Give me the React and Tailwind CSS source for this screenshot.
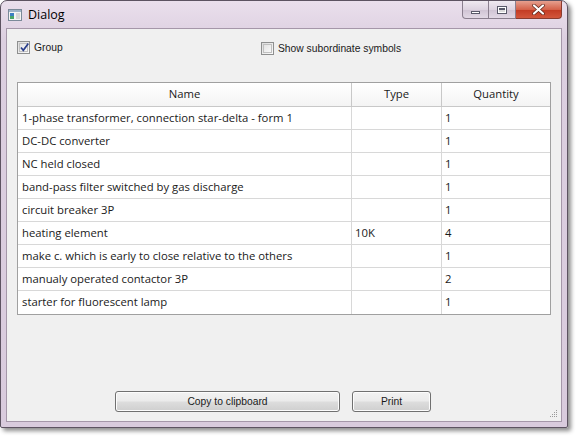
import React from "react";

const rows = [
    ["1-phase transformer, connection star-delta - form 1", "", "1"],
    ["DC-DC converter", "", "1"],
    ["NC held closed", "", "1"],
    ["band-pass filter switched by gas discharge", "", "1"],
    ["circuit breaker 3P", "", "1"],
    ["heating element", "10K", "4"],
    ["make c. which is early to close relative to the others", "", "1"],
    ["manualy operated contactor 3P", "", "2"],
    ["starter for fluorescent lamp", "", "1"],
];

const dlgFont = { fontFamily: '"Liberation Sans", Arial, sans-serif' };

function CheckBox({ checked }) {
    return (
        <div className="w-[13px] h-[13px] border border-[#8e8f8f] bg-gradient-to-br from-[#dcdcdc] to-[#fbfbfb] p-px">
            <div className="w-full h-full border border-[#c0c0c0] bg-gradient-to-br from-[#e4e4e4] to-[#f8f8f8] relative">
                {checked && (
                    <svg className="absolute -left-[1px] -top-[2px]" width="11" height="11" viewBox="0 0 11 11">
                        <path d="M2 5.5 L4.3 8.3 L9.3 1.5" fill="none" stroke="#2b3f8c" strokeWidth="1.7" />
                    </svg>
                )}
            </div>
        </div>
    );
}

function WinButton({ children, width }) {
    return (
        <button
            style={dlgFont}
            className={`${width} h-[21px] rounded-[3px] border border-[#707070] bg-[linear-gradient(#f2f2f2_0%,#ebebeb_48%,#dddddd_52%,#cfcfcf_100%)] shadow-[inset_0_0_0_1px_#fcfcfc] text-[10.3px] text-[#1a1a1a] flex items-center justify-center`}
        >
            {children}
        </button>
    );
}

export default function App() {
    return (
        <div className="w-[582px] h-[442px] bg-white" style={{ fontFamily: '"Open Sans", "Noto Sans", sans-serif' }}>
            <div className="w-[568px] h-[428px] rounded-t-[7px] rounded-b-[2px] border border-[#5d5361] bg-[linear-gradient(#eadfec,#dccfe0_40px,#d9cbdd)] shadow-[3px_3px_4px_rgba(0,0,0,0.45)] flex flex-col px-[5px] pb-[5px]">

                {/* title bar */}
                <div className="h-[27px] flex items-start justify-between">
                    <div className="flex items-center gap-[6px] pt-[8px] pl-[2px]">
                        <svg width="14" height="12" viewBox="0 0 14 12">
                            <rect x="0.5" y="0.5" width="13" height="11" fill="#f4f4f4" stroke="#7b8a99" />
                            <rect x="1" y="1" width="12" height="2" fill="#9fb3c8" />
                            <rect x="2" y="4" width="4" height="3" fill="#3d7ec2" />
                            <rect x="2" y="7" width="4" height="3" fill="#4aa56a" />
                            <rect x="8" y="4" width="4" height="6" fill="#d6d6d6" />
                        </svg>
                        <span className="text-[12.5px] text-black leading-none">Dialog</span>
                    </div>

                    <div className="flex h-[18px]">
                        <div className="w-[27px] h-full rounded-bl-[4px] border border-t-0 border-[#8a7f8e] bg-[linear-gradient(#efe9f0,#ddd3e0_50%,#cfc3d3_51%,#e2d8e5)] flex items-end justify-center pb-[4px]">
                            <div className="w-[9px] h-[3px] bg-white border border-[#5a5a6a]" />
                        </div>
                        <div className="w-[27px] h-full border-b border-r border-[#8a7f8e] bg-[linear-gradient(#efe9f0,#ddd3e0_50%,#cfc3d3_51%,#e2d8e5)] flex items-center justify-center">
                            <div className="w-[10px] h-[8px] border border-[#5a5a6a] bg-white p-px">
                                <div className="w-full h-full border-t-2 border-[#5a5a6a] bg-[#dcdcdc]" />
                            </div>
                        </div>
                        <div className="w-[46px] h-full rounded-br-[4px] border border-t-0 border-l-0 border-[#8a3b2e] bg-[linear-gradient(#e6a08f,#d4624a_50%,#c23a22_51%,#d3573c)] flex items-center justify-center">
                            <svg width="13" height="11" viewBox="0 0 13 11">
                                <path d="M2 1.5 L11 9.5 M11 1.5 L2 9.5" stroke="#5b2318" strokeWidth="3.6" strokeLinecap="round" />
                                <path d="M2 1.5 L11 9.5 M11 1.5 L2 9.5" stroke="#ffffff" strokeWidth="2.2" strokeLinecap="round" />
                            </svg>
                        </div>
                    </div>
                </div>

                {/* client area */}
                <div className="flex-1 bg-[#f0f0f0] border border-[#a597a9] flex flex-col text-[11.3px] text-[#1a1a1a] relative">

                    <div className="flex items-center h-[13px] mt-[12px] pl-[10px] text-[10.3px]" style={dlgFont}>
                        <div className="flex items-center gap-[4px] w-[244px]">
                            <CheckBox checked />
                            <span>Group</span>
                        </div>
                        <div className="flex items-center gap-[4px] mt-[2px]">
                            <CheckBox />
                            <span>Show subordinate symbols</span>
                        </div>
                    </div>

                    {/* table */}
                    <div className="ml-[10px] mt-[28px] w-[534px] border border-[#a0a0a0] bg-white">
                        <div className="flex h-[24px] border-b border-[#c8c8c8] bg-[linear-gradient(#ffffff,#f4f4f4)]">
                            <div className="w-[334px] border-r border-[#c8c8c8] flex items-center justify-center">Name</div>
                            <div className="w-[90px] border-r border-[#c8c8c8] flex items-center justify-center">Type</div>
                            <div className="flex-1 flex items-center justify-center">Quantity</div>
                        </div>
                        {rows.map((r, i) => (
                            <div key={i} className="flex h-[23px] border-b border-[#d8d8d8] last:border-b-0">
                                <div className="w-[334px] border-r border-[#d8d8d8] flex items-center pl-[4px] whitespace-nowrap">{r[0]}</div>
                                <div className="w-[90px] border-r border-[#d8d8d8] flex items-center pl-[3px]">{r[1]}</div>
                                <div className="flex-1 flex items-center pl-[3px]">{r[2]}</div>
                            </div>
                        ))}
                    </div>

                    <div className="flex-1" />

                    <div className="flex gap-[12px] pl-[108px] mb-[9px]">
                        <WinButton width="w-[225px]">Copy to clipboard</WinButton>
                        <WinButton width="w-[79px]">Print</WinButton>
                    </div>

                    {/* size grip */}
                    <svg className="absolute right-[3px] bottom-[3px]" width="8" height="8" viewBox="0 0 8 8">
                        <rect x="6" y="0" width="1" height="1" fill="#9a9a9a" />
                        <rect x="4" y="2" width="1" height="1" fill="#9a9a9a" />
                        <rect x="6" y="2" width="1" height="1" fill="#9a9a9a" />
                        <rect x="2" y="4" width="1" height="1" fill="#9a9a9a" />
                        <rect x="4" y="4" width="1" height="1" fill="#9a9a9a" />
                        <rect x="6" y="4" width="1" height="1" fill="#9a9a9a" />
                        <rect x="0" y="6" width="1" height="1" fill="#9a9a9a" />
                        <rect x="2" y="6" width="1" height="1" fill="#9a9a9a" />
                        <rect x="4" y="6" width="1" height="1" fill="#9a9a9a" />
                        <rect x="6" y="6" width="1" height="1" fill="#9a9a9a" />
                    </svg>
                </div>
            </div>
        </div>
    );
}
